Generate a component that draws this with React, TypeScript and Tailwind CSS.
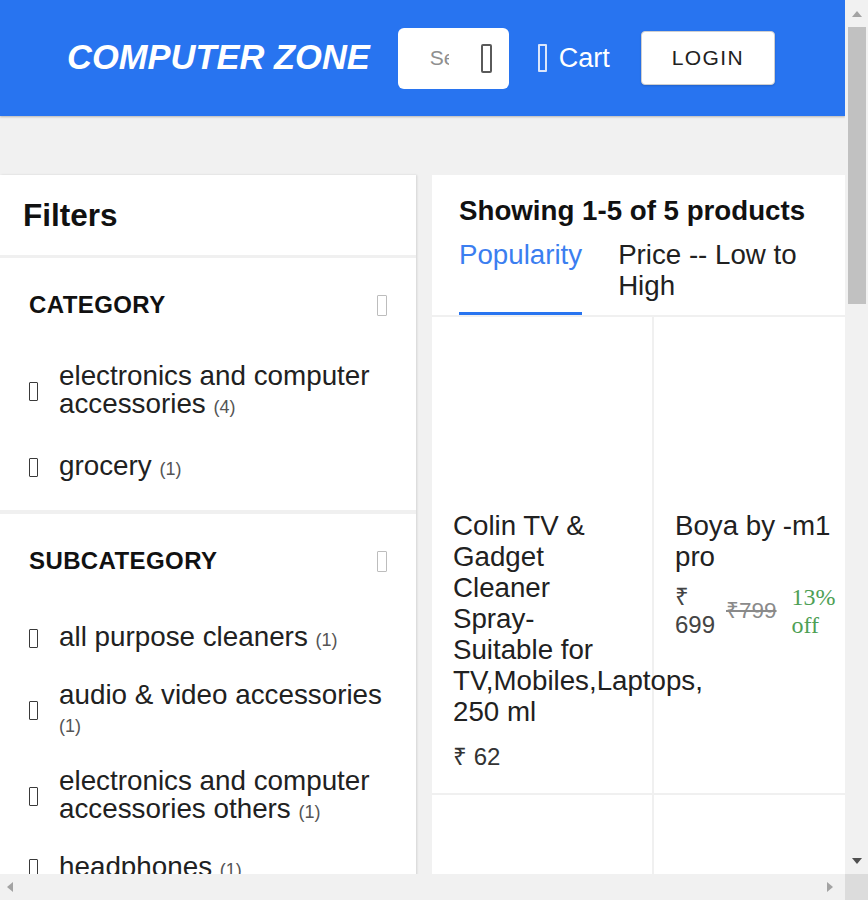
import React from "react";

function Tofu({ className }: { className: string }) {
  return <span className={"inline-block shrink-0 " + className} />;
}

function FilterItem({ label, count }: { label: string; count: number }) {
  return (
    <div className="flex items-center">
      <Tofu className="w-[9px] h-[19px] border-[1.5px] border-[#3a3a3a] rounded-[1px]" />
      <div className="ml-[21px] flex-1 text-[27.8px] leading-[28px] text-[#212121]">
        {label} <span className="text-[18px] text-[#555]">({count})</span>
      </div>
    </div>
  );
}

function FilterSection({
  title,
  items,
  pt,
  pb,
  gapHead,
  gap,
}: {
  title: string;
  items: { label: string; count: number }[];
  pt: string;
  pb: string;
  gapHead: string;
  gap: string;
}) {
  return (
    <section className={"pl-[29px] pr-[29px] " + pt + " " + pb}>
      <div className="flex items-center justify-between">
        <span className="text-[24px] leading-[28px] font-bold tracking-[0.4px] text-[#111]">{title}</span>
        <Tofu className="w-[10px] h-[21px] border-[1.5px] border-[#bdbdbd] rounded-[1px]" />
      </div>
      <div className={"flex flex-col " + gap + " " + gapHead}>
        {items.map((it) => (
          <FilterItem key={it.label} label={it.label} count={it.count} />
        ))}
      </div>
    </section>
  );
}

export default function App() {
  return (
    <div className="w-[868px] h-[900px] overflow-hidden flex flex-col bg-[#f1f1f1] font-['Liberation_Sans',Arial,sans-serif]">
      <div className="flex h-[874px]">
        <div className="w-[845px] h-full overflow-hidden bg-[#f1f1f1]">
          {/* Header */}
          <header className="h-[116px] bg-[#2874f0] flex items-center pl-[67px] shadow-[0_1px_2px_rgba(0,0,0,0.25)]">
            <div className="text-[34.5px] font-bold italic text-white whitespace-nowrap">COMPUTER ZONE</div>
            <div className="ml-[28px] w-[111px] h-[61px] bg-white rounded-[6px] flex items-center pl-[32px]">
              <span className="w-[19px] overflow-hidden whitespace-nowrap text-[21px] text-[#8f8f8f]">Search</span>
              <Tofu className="ml-[32px] w-[11px] h-[29px] border-2 border-[#5a5a5a] rounded-[2px]" />
            </div>
            <div className="ml-[29px] flex items-center">
              <Tofu className="w-[9px] h-[28px] border-2 border-[#dbe6fb] rounded-[1px]" />
              <span className="ml-[12px] text-[27px] text-white">Cart</span>
            </div>
            <button className="ml-[31px] w-[134px] h-[54px] bg-white border border-[#cfcfcf] rounded-[4px] text-[21px] font-medium tracking-[1.4px] text-[#212121] shadow-[0_1px_2px_rgba(0,0,0,0.15)]">
              LOGIN
            </button>
          </header>

          {/* Body */}
          <div className="pt-[59px] flex items-start gap-[16px]">
            {/* Filters */}
            <aside className="w-[416px] shrink-0 bg-white shadow-[1px_0_2px_rgba(0,0,0,0.12)]">
              <div className="px-[23px] pt-[22px] pb-[22px]">
                <h2 className="text-[31.5px] leading-[36px] font-bold text-[#111]">Filters</h2>
              </div>
              <div className="h-[3px] bg-[#f0f0f0]" />
              <FilterSection
                title="CATEGORY"
                pt="pt-[33px]"
                pb="pb-[27px]"
                gapHead="mt-[43px]"
                gap="gap-[31px]"
                items={[
                  { label: "electronics and computer accessories", count: 4 },
                  { label: "grocery", count: 1 },
                ]}
              />
              <div className="h-[4px] bg-[#f0f0f0]" />
              <FilterSection
                title="SUBCATEGORY"
                pt="pt-[33px]"
                pb="pb-[28px]"
                gapHead="mt-[48px]"
                gap="gap-[27px]"
                items={[
                  { label: "all purpose cleaners", count: 1 },
                  { label: "audio & video accessories", count: 1 },
                  { label: "electronics and computer accessories others", count: 1 },
                  { label: "headphones", count: 1 },
                  { label: "keyboards", count: 1 },
                ]}
              />
            </aside>

            {/* Products */}
            <main className="w-[444px] shrink-0 bg-white text-[#212121]">
              <div className="px-[27px] pt-[20px]">
                <h1 className="text-[27.7px] leading-[31px] font-bold text-[#111] whitespace-nowrap">Showing 1-5 of 5 products</h1>
                <div className="mt-[13px] flex items-stretch">
                  <div className="border-b-[3px] border-[#2874f0] text-[27.7px] leading-[31px] text-[#3b7ef0]">Popularity</div>
                  <div className="ml-[36px] w-[190px] pb-[14px] text-[27.7px] leading-[31px] text-[#212121]">Price -- Low to High</div>
                </div>
              </div>
              <div className="h-[2px] bg-[#f0f0f0]" />
              <div className="grid grid-cols-2">
                <div className="border-r-2 border-b-2 border-[#f0f0f0] px-[21px] pt-[21px] pb-[22px]">
                  <div className="h-[160px]" />
                  <div className="mt-[12px] w-[170px] text-[27.7px] leading-[31px] text-[#212121]">
                    Colin TV &amp; Gadget Cleaner Spray-Suitable for TV,Mobiles,Laptops, 250 ml
                  </div>
                  <div className="mt-[16px] text-[24px] leading-[28px] text-[#333]">₹ 62</div>
                </div>
                <div className="border-b-2 border-[#f0f0f0] px-[21px] pt-[21px]">
                  <div className="h-[160px]" />
                  <div className="mt-[12px] w-[180px] text-[27.7px] leading-[31px] text-[#212121]">Boya by -m1 pro</div>
                  <div className="mt-[11px] flex items-center">
                    <div className="w-[36px] text-[24px] leading-[28px] text-[#444]">₹ 699</div>
                    <div className="ml-[15px] text-[22.5px] leading-[24px] text-[#8a8a8a] line-through whitespace-nowrap">₹799</div>
                    <div className="ml-[15px] w-[46px] font-['Liberation_Serif',serif] text-[24px] leading-[28px] text-[#4e9f55]">
                      13% off
                    </div>
                  </div>
                </div>
                <div className="border-r-2 border-[#f0f0f0] h-[300px]" />
                <div className="h-[300px]" />
              </div>
            </main>
          </div>
        </div>

        {/* Vertical scrollbar */}
        <div className="w-[23px] h-full bg-[#f1f1f1] flex flex-col items-center">
          <div className="h-[27px] flex items-center justify-center">
            <svg width="10" height="6" viewBox="0 0 10 6"><polygon points="5,0 10,6 0,6" fill="#a3a3a3" /></svg>
          </div>
          <div className="w-[18px] h-[277px] bg-[#c1c1c1]" />
          <div className="flex-1" />
          <div className="h-[27px] flex items-center justify-center">
            <svg width="10" height="6" viewBox="0 0 10 6"><polygon points="0,0 10,0 5,6" fill="#505050" /></svg>
          </div>
        </div>
      </div>

      {/* Horizontal scrollbar */}
      <div className="flex h-[26px]">
        <div className="w-[845px] h-full bg-[#f1f1f1] flex items-center justify-between px-[7px]">
          <svg width="6" height="10" viewBox="0 0 6 10"><polygon points="6,0 6,10 0,5" fill="#a3a3a3" /></svg>
          <svg width="6" height="10" viewBox="0 0 6 10" className="mr-[5px]"><polygon points="0,0 0,10 6,5" fill="#a3a3a3" /></svg>
        </div>
        <div className="w-[23px] h-full bg-[#dcdcdc]" />
      </div>
    </div>
  );
}
